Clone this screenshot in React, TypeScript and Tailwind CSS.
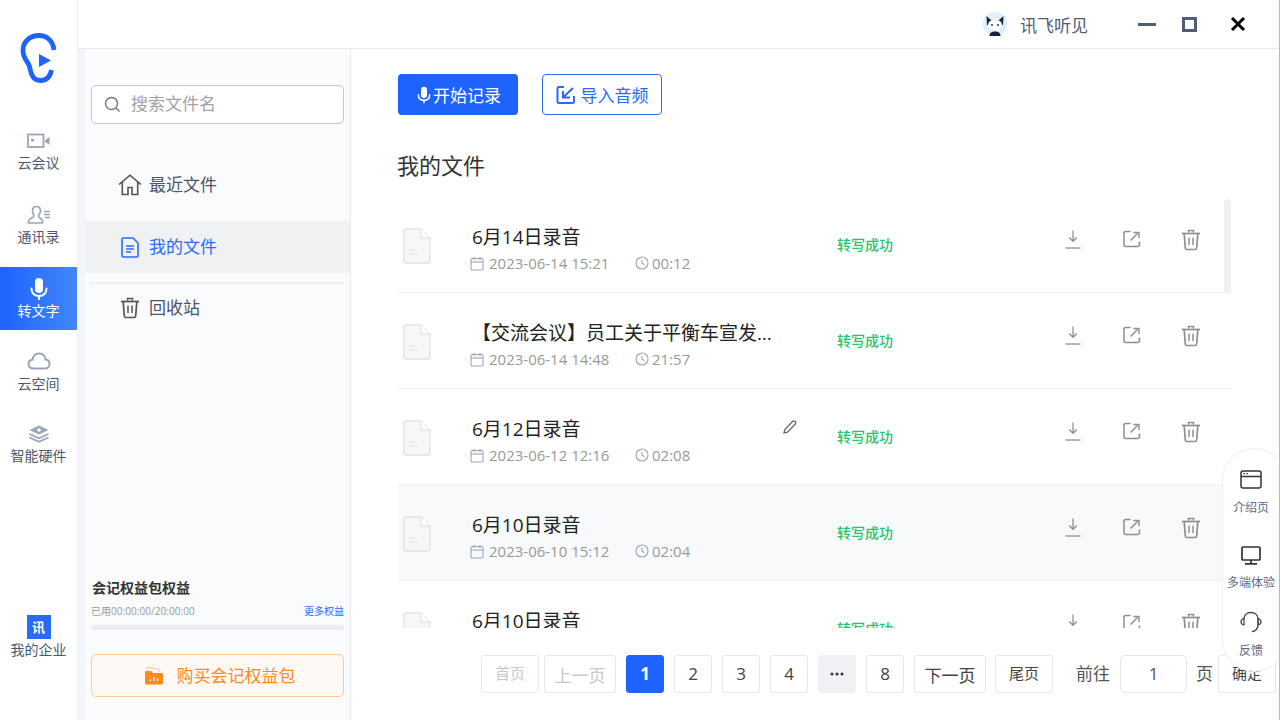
import React from "react";

const Ear = () => (
  <svg width="36" height="50" viewBox="0 0 36 50" fill="none">
    <path d="M34 17C33 8 27 2.5 19 2.5C9.5 2.5 3 9 3 17.5C3 24 6 27 8.5 31C10.5 35 10 39 12.5 43C14.5 46.5 17.5 47.5 20.5 47.5C26 47.5 30 44.5 31.5 37" stroke="#1f63ff" strokeWidth="4.8" strokeLinecap="butt" />
    <path d="M19 21L31 27.5L19 34Z" fill="#1f63ff" />
  </svg>
);

const RailIcon = ({ k }: { k: string }) => {
  const c = "#9aa5b8";
  if (k === "video")
    return (
      <svg width="24" height="16" viewBox="0 0 24 16" fill="none">
        <rect x="1" y="1.5" width="15.5" height="12.5" stroke={c} strokeWidth="1.8" />
        <rect x="4" y="6" width="3" height="2.6" fill={c} />
        <path d="M18 7.5L22.5 3.8V12L18 8.8Z" fill={c} />
      </svg>
    );
  if (k === "user")
    return (
      <svg width="24" height="20" viewBox="0 0 24 20" fill="none">
        <path d="M9.5 1.5C6.5 1.5 5.5 4 5.5 6C5.5 8.5 7 9.7 7 11C7 12.8 1.5 13.5 1.5 16.2V18H15.5V15.8C15 13.5 11.5 13 11.5 11C11.5 9.7 13.5 8.5 13.5 6C13.5 4 12.5 1.5 9.5 1.5Z" stroke={c} strokeWidth="1.7" />
        <path d="M17 6.5H23M17 9.5H23M18 12.5H23" stroke={c} strokeWidth="1.4" />
      </svg>
    );
  if (k === "mic") return <Mic size={24} color="#fff" />;
  if (k === "cloud")
    return (
      <svg className="mt-[-2px]" width="24" height="18" viewBox="0 0 24 18" fill="none">
        <path d="M6.5 16.5C3.5 16.5 1.5 14.5 1.5 12C1.5 9.5 3.3 8 5.5 7.8C6.2 4 8.8 1.5 12.2 1.5C15.6 1.5 18 4 18.6 7.6C21 7.8 22.5 9.7 22.5 12C22.5 14.5 20.5 16.5 18 16.5Z" stroke={c} strokeWidth="2" />
      </svg>
    );
  return (
    <svg width="22" height="18" viewBox="0 0 22 18" fill="none">
      <path d="M11 0.5L20.5 5L11 9.5L1.5 5Z" fill={c} />
      <circle cx="11" cy="5" r="1.8" fill="#fff" />
      <path d="M1.5 9L11 13.2L20.5 9" stroke={c} strokeWidth="1.8" />
      <path d="M1.5 12.5L11 16.7L20.5 12.5" stroke={c} strokeWidth="1.8" />
    </svg>
  );
};

const Mic = ({ size, color }: { size: number; color: string }) => (
  <svg width={size} height={size} viewBox="0 0 24 24" fill="none">
    <rect x="8" y="1" width="8" height="15" rx="4" fill={color} />
    <path d="M4.5 11.5C4.5 16 7.5 19 12 19C16.5 19 19.5 16 19.5 11.5" stroke={color} strokeWidth="2" strokeLinecap="round" />
    <path d="M12 19V23" stroke={color} strokeWidth="2" />
  </svg>
);

const RailItem = ({ icon, label, active, className }: { icon: string; label: string; active?: boolean; className?: string }) => (
  <div
    className={`w-[77px] h-[63px] flex flex-col items-center ${className ?? ""} ${active ? "bg-gradient-to-r from-[#1f62ff] to-[#4386fb] text-white" : "text-[#4a5872]"}`}
  >
    <div className="h-[26px] mt-[9px] flex items-center justify-center">
      <RailIcon k={icon} />
    </div>
    <div className="text-[14px] leading-[20px] mt-[-1px] whitespace-nowrap">{label}</div>
  </div>
);

const TrashIcon = ({ color = "#8e8e8e", w = 20 }: { color?: string; w?: number }) => (
  <svg width={w} height={w + 2} viewBox="0 0 20 22" fill="none">
    <path d="M1 4.5H19" stroke={color} strokeWidth="1.7" />
    <path d="M7.5 3.5V1.5H12.5V3.5" stroke={color} strokeWidth="1.5" />
    <path d="M3.2 4.5L4.3 19C4.4 20 5 20.5 6 20.5H14C15 20.5 15.6 20 15.7 19L16.8 4.5" stroke={color} strokeWidth="1.7" />
    <path d="M8 8.5V16M12 8.5V16" stroke={color} strokeWidth="1.5" />
  </svg>
);

const FileIcon = () => (
  <svg width="28" height="36" viewBox="0 0 28 36" fill="none">
    <path d="M3 1H18L27 10V33C27 34.2 26.2 35 25 35H3C1.8 35 1 34.2 1 33V3C1 1.8 1.8 1 3 1Z" fill="#f7f7f8" stroke="#e2e3e6" strokeWidth="1.4" />
    <path d="M18 1V10H27" fill="#fff" stroke="#e2e3e6" strokeWidth="1.4" />
    <path d="M6 22H13M6 25.5H16" stroke="#e2e3e6" strokeWidth="1.2" />
  </svg>
);

const Calendar = () => (
  <svg width="14" height="15" viewBox="0 0 14 15" fill="none">
    <rect x="1" y="2.5" width="12" height="11.5" rx="1.2" stroke="#9aa3b4" strokeWidth="1.1" />
    <path d="M1 6H13M4 1V4M10 1V4" stroke="#9aa3b4" strokeWidth="1.1" />
  </svg>
);

const Clock = () => (
  <svg width="14" height="14" viewBox="0 0 14 14" fill="none">
    <circle cx="7" cy="7" r="6" stroke="#9aa3b4" strokeWidth="1.1" />
    <path d="M7 3.5V7.3L9.5 8.8" stroke="#9aa3b4" strokeWidth="1.1" />
  </svg>
);

const Download = () => (
  <svg width="16" height="20" viewBox="0 0 16 20" fill="none">
    <path d="M8 1.5V12M4.2 8.5L8 12.3L11.8 8.5" stroke="#8e8e8e" strokeWidth="1.3" />
    <path d="M0.5 19H15.5" stroke="#8e8e8e" strokeWidth="1.3" />
  </svg>
);

const Share = () => (
  <svg width="18" height="18" viewBox="0 0 18 18" fill="none">
    <path d="M7.5 1.5H3C1.8 1.5 1 2.3 1 3.5V14.5C1 15.7 1.8 16.5 3 16.5H14.5C15.7 16.5 16.5 15.7 16.5 14.5V11.5" stroke="#8e8e8e" strokeWidth="1.5" />
    <path d="M7.5 10.5L14.5 3.5M10.5 2.5H16V8" stroke="#8e8e8e" strokeWidth="1.5" />
  </svg>
);

const Row = ({ title, date, dur, hover, pencil }: { title: string; date: string; dur: string; hover?: boolean; pencil?: boolean }) => (
  <div className={`h-[96px] shrink-0 flex items-start border-b border-[#eff0f2] ${hover ? "bg-[#f8f9fb]" : ""}`}>
    <div className="w-[74px] pl-[5px] pt-[31px] shrink-0">
      <FileIcon />
    </div>
    <div className="w-[365px] shrink-0 pt-[26px] relative">
      <div className="text-[19px] leading-[28px] text-[#222] whitespace-nowrap">{title}</div>
      <div className="flex items-center text-[15px] leading-[20px] text-[#999] mt-[2px] ml-[-2px]">
        <Calendar />
        <span className="ml-[5px] w-[146px]">{date}</span>
        <Clock />
        <span className="ml-[3px]">{dur}</span>
      </div>
      {pencil && (
        <svg className="absolute left-[310px] top-[30px]" width="16" height="16" viewBox="0 0 16 16" fill="none">
          <path d="M2 14L2.8 10.5L10.5 2.5C11.3 1.7 12.3 1.7 13.2 2.5C14 3.3 14 4.4 13.2 5.2L5.5 13.2Z" stroke="#666" strokeWidth="1.3" />
        </svg>
      )}
    </div>
    <div className="w-[206px] shrink-0 pt-[38px] text-[14px] leading-[20px] font-medium text-[#27c46f]">转写成功</div>
    <div className="flex pt-[32px] items-start shrink-0">
      <div className="w-[59px] flex justify-center"><Download /></div>
      <div className="w-[59px] flex justify-center pt-[1px]"><Share /></div>
      <div className="w-[59px] flex justify-center"><TrashIcon /></div>
    </div>
  </div>
);

const PageBtn = ({ children, w, disabled, active, more, small, low }: { children: React.ReactNode; w: number; disabled?: boolean; active?: boolean; more?: boolean; small?: boolean; low?: boolean }) => {
  const width = w === 58 ? "w-[58px]" : w === 72 ? "w-[72px]" : "w-[38px]";
  const look = active
    ? "bg-[#1f63ff] text-white font-bold border-[#1f63ff]"
    : more
      ? "bg-[#f0f1f5] text-[#333] border-[#f0f1f5]"
      : disabled
        ? "bg-white border-[#e7e7ea] text-[#c8c8c8]"
        : "bg-white border-[#e7e7ea] text-[#444]";
  return (
    <div className={`${width} h-[38px] shrink-0 rounded-[3px] border flex items-center justify-center ${small ? "text-[15px] pb-[1px]" : "text-[17px]"} ${low ? "pt-[3px]" : ""} ${look}`}>
      {children}
    </div>
  );
};

const Cat = () => (
  <svg width="24" height="24" viewBox="0 0 24 24">
    <circle cx="12" cy="12" r="12" fill="#dcefFb" />
    <path d="M3.5 4L8.5 8.5H15.5L20.5 4L20 13H4Z" fill="#1b2140" />
    <ellipse cx="12" cy="13" rx="7" ry="5.5" fill="#fff" />
    <circle cx="9" cy="13" r="0.9" fill="#1b2140" />
    <circle cx="15" cy="13" r="0.9" fill="#1b2140" />
    <path d="M6.5 24C6.5 20.5 9 19.5 12 19.5C15 19.5 17.5 20.5 17.5 24Z" fill="#1b2140" />
  </svg>
);

export default function App() {
  return (
    <div className="w-[1280px] h-[720px] overflow-hidden relative flex bg-white border-r border-[#b8b8b8] font-['Open_Sans','Noto_Sans_CJK_SC',sans-serif]">
      {/* rail */}
      <div className="w-[78px] shrink-0 h-full flex flex-col items-start border-r border-[#eef1f6]">
        <div className="ml-[20px] mt-[33px] h-[50px]"><Ear /></div>
        <RailItem icon="video" label="云会议" className="mt-[36px]" />
        <RailItem icon="user" label="通讯录" className="mt-[11px]" />
        <RailItem icon="mic" label="转文字" active className="mt-[11px]" />
        <RailItem icon="cloud" label="云空间" className="mt-[10px]" />
        <RailItem icon="stack" label="智能硬件" className="mt-[9px]" />
        <div className="w-[77px] mt-auto mb-[60px] flex flex-col items-center text-[#4a5872]">
          <div className="w-[24px] h-[24px] bg-[#2a6bf6] text-white text-[13px] font-bold flex items-center justify-center leading-none">讯</div>
          <div className="text-[14px] leading-[20px] mt-[1px] whitespace-nowrap">我的企业</div>
        </div>
      </div>

      <div className="flex-1 min-w-0 flex flex-col">
        {/* title bar */}
        <div className="h-[49px] shrink-0 flex items-center border-b border-[#e8e9ef]">
          <div className="ml-[905px]"><Cat /></div>
          <div className="ml-[13px] pt-[4px] text-[17px] leading-[24px] text-[#4f5d77] w-[70px] whitespace-nowrap">讯飞听见</div>
          <div className="ml-[48px] w-[18px] h-[3px] bg-[#4f5d77]" />
          <div className="ml-[26px] w-[15px] h-[15px] border-[3px] border-[#4f5d77]" />
          <svg className="ml-[33px]" width="16" height="16" viewBox="0 0 16 16"><path d="M2 2L14 14M14 2L2 14" stroke="#000" strokeWidth="3" /></svg>
        </div>

        <div className="flex-1 min-h-0 flex">
          {/* sidebar */}
          <div className="w-[273px] shrink-0 h-full flex border-r border-[#e6e8ee] bg-[#fafbfd]">
            <div className="w-[7px] shrink-0 bg-[#f2f5fa]" />
            <div className="flex-1 min-w-0 flex flex-col">
              <div className="mx-[6px] mt-[36px] w-[253px] h-[39px] rounded-[5px] border border-[#c4c6cc] bg-white flex items-center pl-[12px]">
                <svg width="17" height="17" viewBox="0 0 17 17" fill="none">
                  <circle cx="7.5" cy="7.5" r="6" stroke="#777" strokeWidth="1.5" />
                  <path d="M12 12L15.5 15.5" stroke="#777" strokeWidth="1.5" />
                </svg>
                <span className="ml-[10px] mt-[-2px] text-[17px] leading-[24px] text-[#a3a3a3]">搜索文件名</span>
              </div>
              <div className="h-[52px] mt-[35px] flex items-center pl-[33px] text-[17px] text-[#4a5568]">
                <svg width="24" height="22" viewBox="0 0 24 22" fill="none">
                  <path d="M1 10.5L12 1.2L23 10.5M4.3 8V20.5H10V13.5H14V20.5H19.7V8" stroke="#555" strokeWidth="1.6" />
                </svg>
                <span className="ml-[7px]">最近文件</span>
              </div>
              <div className="h-[52px] mt-[10px] bg-[#f0f1f3] flex items-center pl-[36px] text-[17px] text-[#2b6cf6]">
                <svg width="18" height="21" viewBox="0 0 18 21" fill="none">
                  <path d="M2 1H12L17 6V19C17 19.6 16.6 20 16 20H2C1.4 20 1 19.6 1 19V2C1 1.4 1.4 1 2 1Z" stroke="#2b6cf6" strokeWidth="1.6" />
                  <path d="M5 9H13M5 12H13M5 15H10" stroke="#2b6cf6" strokeWidth="1.4" />
                </svg>
                <span className="ml-[10px]">我的文件</span>
              </div>
              <div className="mx-[6px] mt-[9px] w-[253px] h-[2px] bg-[#f0f1f4]" />
              <div className="h-[40px] mt-[4px] flex items-center pl-[35px] text-[17px] text-[#4a5568]">
                <TrashIcon color="#555" />
                <span className="ml-[9px]">回收站</span>
              </div>
              <div className="mt-auto mx-[6px] w-[253px] pb-[23px]">
                <div className="text-[14px] leading-[20px] font-bold text-[#333] pl-[1px]">会记权益包权益</div>
                <div className="flex justify-between items-center mt-[6px] h-[14px]">
                  <span className="text-[10px] text-[#999] tracking-[0.05px]">已用00:00:00/20:00:00</span>
                  <span className="text-[10px] text-[#2b6cf6]">更多权益</span>
                </div>
                <div className="h-[5px] rounded-[3px] bg-[#eceef3] mt-[7px]" />
                <div className="h-[43px] mt-[24px] rounded-[5px] border border-[#ffc894] bg-[#fff9f5] flex items-center justify-center text-[17px] text-[#ff8a1f]">
                  <svg width="20" height="20" viewBox="0 0 20 20" fill="none">
                    <path d="M3 5L4 1.5L15 3.5L16 6" stroke="#ffc999" strokeWidth="1.2" />
                    <path d="M2.5 5H7L9 7H17.5C18.4 7 19 7.6 19 8.5V17C19 18 18.4 18.5 17.5 18.5H2.5C1.6 18.5 1 18 1 17V6.5C1 5.6 1.6 5 2.5 5Z" fill="#ff8a1f" />
                    <path d="M6.5 15V13.5M10 15V11M13.5 15V12.5" stroke="#fff" strokeWidth="1.3" />
                  </svg>
                  <span className="ml-[13px] mr-[-4px]">购买会记权益包</span>
                </div>
              </div>
            </div>
          </div>

          {/* main */}
          <div className="flex-1 min-w-0 flex flex-col pl-[47px] pt-[25px]">
            <div className="flex">
              <div className="w-[120px] h-[41px] rounded-[4px] bg-[#1f63ff] text-white text-[17px] flex items-center justify-center">
                <Mic size={18} color="#fff" />
                <span className="pt-[2px]">开始记录</span>
              </div>
              <div className="ml-[24px] w-[120px] h-[41px] rounded-[4px] border border-[#2b6cf6] text-[#2b6cf6] text-[17px] flex items-center justify-center">
                <svg width="20" height="20" viewBox="0 0 20 20" fill="none">
                  <path d="M8 2H3C2 2 1.5 2.5 1.5 3.5V16.5C1.5 17.5 2 18 3 18H16.5C17.5 18 18 17.5 18 16.5V11" stroke="#2b6cf6" strokeWidth="2" />
                  <path d="M17 3L8 11.5M7 6V12.5H14" stroke="#2b6cf6" strokeWidth="2" />
                </svg>
                <span className="ml-[5px] pt-[2px]">导入音频</span>
              </div>
            </div>
            <div className="mt-[35px] text-[22px] leading-[30px] text-[#333] ml-[-1px]">我的文件</div>
            <div className="mt-[17px] w-[834px] h-[431px] overflow-hidden flex flex-col relative">
              <Row title="6月14日录音" date="2023-06-14 15:21" dur="00:12" />
              <Row title="【交流会议】员工关于平衡车宣发…" date="2023-06-14 14:48" dur="21:57" />
              <Row title="6月12日录音" date="2023-06-12 12:16" dur="02:08" pencil />
              <Row title="6月10日录音" date="2023-06-10 15:12" dur="02:04" hover />
              <Row title="6月10日录音" date="2023-06-10 15:12" dur="02:04" />
              <div className="absolute right-[1px] top-[2px] w-[7px] h-[95px] rounded-[4px] bg-[#eef0f3]" />
            </div>
            <div className="mt-[27px] flex items-center ml-[83px]">
              <PageBtn w={58} disabled small>首页</PageBtn>
              <div className="w-[5px] shrink-0" />
              <PageBtn w={72} disabled low>上一页</PageBtn>
              <div className="w-[10px] shrink-0" />
              <div className="flex gap-[10px]">
                <PageBtn w={38} active>1</PageBtn>
                <PageBtn w={38}>2</PageBtn>
                <PageBtn w={38}>3</PageBtn>
                <PageBtn w={38}>4</PageBtn>
                <PageBtn w={38} more>
                  <svg width="14" height="4" viewBox="0 0 14 4"><circle cx="2" cy="2" r="1.5" fill="#333" /><circle cx="7" cy="2" r="1.5" fill="#333" /><circle cx="12" cy="2" r="1.5" fill="#333" /></svg>
                </PageBtn>
                <PageBtn w={38}>8</PageBtn>
                <PageBtn w={72} low>下一页</PageBtn>
              </div>
              <div className="w-[9px] shrink-0" />
              <PageBtn w={58} small>尾页</PageBtn>
              <span className="ml-[23px] w-[44px] shrink-0 text-[17px] text-[#555] whitespace-nowrap">前往</span>
              <div className="w-[67px] h-[38px] shrink-0 rounded-[5px] border border-[#e2e4ea] flex items-center justify-center text-[17px] text-[#555]">1</div>
              <span className="ml-[9px] w-[22px] shrink-0 text-[17px] text-[#555]">页</span>
              <PageBtn w={58} small>确定</PageBtn>
            </div>
          </div>
        </div>
      </div>

      {/* floating panel */}
      <div className="absolute left-[1222px] top-[448px] w-[64px] h-[224px] rounded-[32px] border border-[#eceef2] bg-white flex flex-col items-center pr-[6px] text-[12px] leading-[16px] text-[#5a6a85]">
        <svg className="mt-[21px]" width="22" height="19" viewBox="0 0 22 19" fill="none">
          <rect x="1" y="1" width="20" height="17" rx="2" stroke="#333" strokeWidth="1.5" />
          <path d="M1 6.5H21" stroke="#333" strokeWidth="1.5" />
          <path d="M3.5 3.7H5M6.5 3.7H8" stroke="#333" strokeWidth="1.2" />
        </svg>
        <div className="mt-[11px] whitespace-nowrap">介绍页</div>
        <svg className="mt-[30px]" width="20" height="19" viewBox="0 0 20 19" fill="none">
          <rect x="1" y="1" width="18" height="13" rx="1" stroke="#333" strokeWidth="1.7" />
          <path d="M10 14V17.5M4 17.8H16" stroke="#333" strokeWidth="1.7" />
        </svg>
        <div className="mt-[10px] whitespace-nowrap">多端体验</div>
        <svg className="mt-[20px]" width="22" height="22" viewBox="0 0 22 22" fill="none">
          <path d="M4 8C4 4 7 1.5 11 1.5C15 1.5 18 4 18 8V14C18 18 15 20.5 12 20.5" stroke="#444" strokeWidth="1.3" />
          <path d="M4 7.5C2 8 1 9.5 1 11C1 12.5 2 13.5 4 14ZM18 7.5C20 8 21 9.5 21 11C21 12.5 20 13.5 18 14Z" stroke="#444" strokeWidth="1.2" />
        </svg>
        <div className="mt-[10px] whitespace-nowrap">反馈</div>
      </div>
    </div>
  );
}
